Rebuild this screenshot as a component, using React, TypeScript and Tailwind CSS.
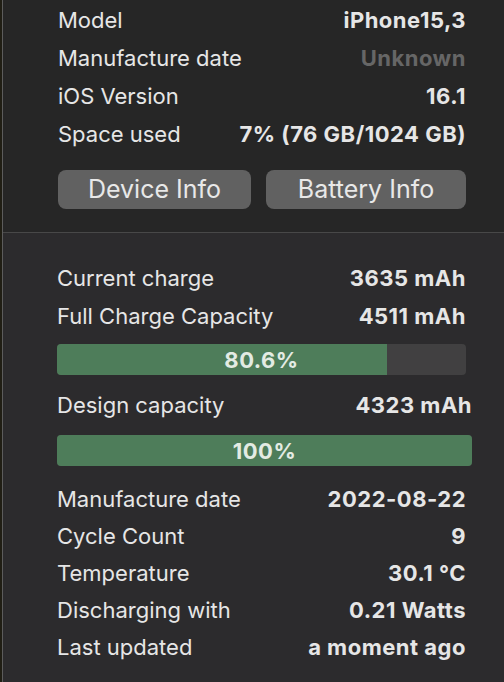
import React from "react";

const Row = ({ label, value, muted, h = "h-[38px]", right = "pr-[38px]" }: { label: string; value: string; muted?: boolean; h?: string; right?: string }) => (
  <div className={`flex items-center justify-between ${h} ${right}`}>
    <span className="text-[#e6e6e6]">{label}</span>
    <span className={`font-bold tracking-[0.5px] ${muted ? "text-[#666666]" : "text-[#e6e6e6]"}`}>{value}</span>
  </div>
);

const Bar = ({ pct, label, extra }: { pct: number; label: string; extra?: boolean }) => (
  <div className={`relative h-[31px] rounded-[4px] bg-[#414041] overflow-hidden ${extra ? "mr-[32px]" : "mr-[38px]"}`}>
    <div className="absolute inset-y-0 left-0 bg-[#4e7d5a]" style={{ width: `${pct}%` }} />
    <div className="relative flex h-full items-center justify-center font-bold tracking-[0.5px] text-[#e3ebe3] text-[22px]">{label}</div>
  </div>
);

export default function App() {
  return (
    <div
      className="w-[504px] h-[682px] flex bg-[#1c1b12] overflow-hidden text-[22px] leading-none"
      style={{ fontFamily: 'Inter, "Noto Sans", sans-serif' }}
    >
      <div className="w-[2px] bg-[#201e14]" />
      <div className="w-[1px] bg-[#5c5c5c]" />
      <div className="flex-1 flex flex-col">
        <div className="bg-[#262626] pl-[55px] pt-[1px] h-[232px]">
          <Row label="Model" value="iPhone15,3" />
          <Row label="Manufacture date" value="Unknown" muted />
          <Row label="iOS Version" value="16.1" />
          <Row label="Space used" value="7% (76 GB/1024 GB)" />
          <div className="flex gap-[15px] mt-[17px] pr-[38px]">
            <button className="w-[193px] h-[39px] rounded-[8px] bg-[#616161] text-[#e8e8e8] text-[25px]">Device Info</button>
            <button className="flex-1 h-[39px] rounded-[8px] bg-[#616161] text-[#e8e8e8] text-[25px]">Battery Info</button>
          </div>
        </div>
        <div className="h-[1px] bg-[#484848]" />
        <div className="flex-1 bg-[#2c2b2d] pl-[54px] pt-[26px]">
          <Row label="Current charge" value="3635 mAh" />
          <Row label="Full Charge Capacity" value="4511 mAh" />
          <div className="mt-[9px]">
            <Bar pct={80.6} label="80.6%" />
          </div>
          <div className="mt-[11px]">
            <Row label="Design capacity" value="4323 mAh" right="pr-[32px]" />
          </div>
          <div className="mt-[11px]">
            <Bar pct={100} label="100%" extra />
          </div>
          <div className="mt-[14px]">
            <Row label="Manufacture date" value="2022-08-22" h="h-[37px]" />
            <Row label="Cycle Count" value="9" h="h-[37px]" />
            <Row label="Temperature" value="30.1 °C" h="h-[37px]" />
            <Row label="Discharging with" value="0.21 Watts" h="h-[37px]" />
            <Row label="Last updated" value="a moment ago" h="h-[37px]" />
          </div>
        </div>
      </div>
    </div>
  );
}
